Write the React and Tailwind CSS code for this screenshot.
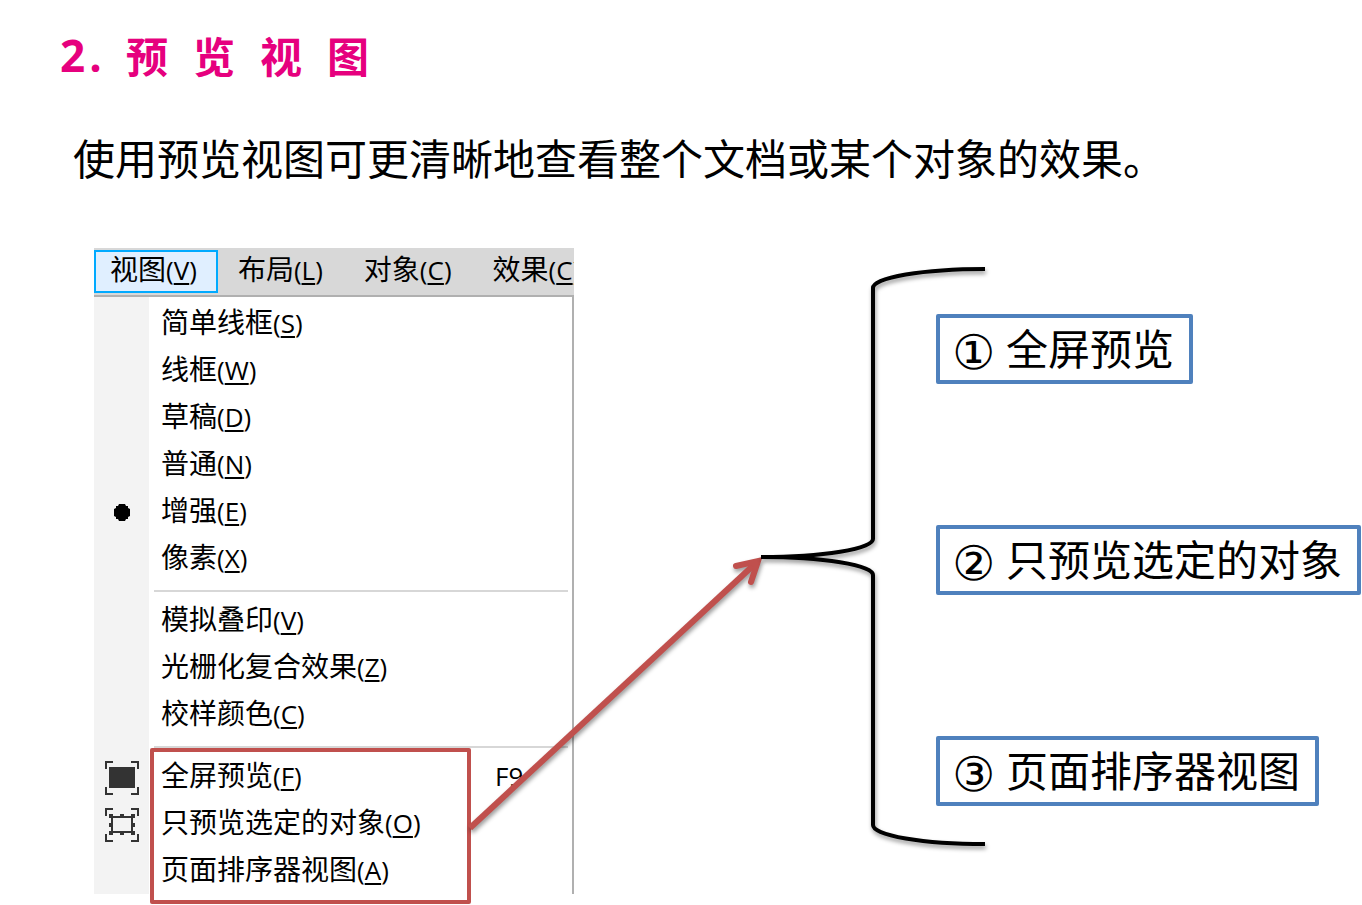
import React from 'react';

const menuBar = [
  { label: '视图', hotkey: 'V', active: true },
  { label: '布局', hotkey: 'L' },
  { label: '对象', hotkey: 'C' },
  { label: '效果', hotkey: 'C' },
];

const menuGroups = [
  [
    { label: '简单线框', hotkey: 'S' },
    { label: '线框', hotkey: 'W' },
    { label: '草稿', hotkey: 'D' },
    { label: '普通', hotkey: 'N' },
    { label: '增强', hotkey: 'E', icon: 'dot' },
    { label: '像素', hotkey: 'X' },
  ],
  [
    { label: '模拟叠印', hotkey: 'V' },
    { label: '光栅化复合效果', hotkey: 'Z' },
    { label: '校样颜色', hotkey: 'C' },
  ],
  [
    { label: '全屏预览', hotkey: 'F', icon: 'full', shortcut: 'F9' },
    { label: '只预览选定的对象', hotkey: 'O', icon: 'selected' },
    { label: '页面排序器视图', hotkey: 'A' },
  ],
];

const options = [
  { num: '①', text: '全屏预览' },
  { num: '②', text: '只预览选定的对象' },
  { num: '③', text: '页面排序器视图' },
];

const Corners = () => (
  <path d="M1 8V1H8 M26 1H33V8 M33 26V33H26 M8 33H1V26" fill="none" stroke="#333" strokeWidth="2" />
);

const ItemIcon = ({ type }) => {
  if (type === 'dot') {
    return (
      <svg width="18" height="18" viewBox="0 0 18 18">
        <path d="M6 1H12L13 3H15V5L17 6V13L15 14V16H13L12 18H6L5 16H3V14L1 13V6L3 5V3H5Z" fill="#000" />
      </svg>
    );
  }
  if (type === 'full') {
    return (
      <svg width="34" height="36" viewBox="0 -2 34 36">
        <Corners />
        <rect x="4" y="6" width="26" height="21" fill="#333" />
      </svg>
    );
  }
  if (type === 'selected') {
    return (
      <svg width="34" height="36" viewBox="0 -2 34 36">
        <Corners />
        <rect x="7" y="9" width="20" height="15" fill="none" stroke="#333" strokeWidth="2" />
        <path
          d="M4 6h4v4h-4z M15 6h4v2h-4z M26 6h4v4h-4z M4 15h2v4h-2z M28 15h2v4h-2z M4 23h4v4h-4z M15 25h4v2h-4z M26 23h4v4h-4z"
          fill="#333"
        />
      </svg>
    );
  }
  return null;
};

const Label = ({ label, hotkey }) => (
  <span className="whitespace-nowrap">
    {label}
    <span className="text-[26px]">
      (<u className="decoration-2 underline-offset-3">{hotkey}</u>)
    </span>
  </span>
);

const ViewMenu = () => (
  <div className="w-[480px] shrink-0 text-[28px] leading-[40px] font-['Open_Sans','Noto_Sans_CJK_SC',sans-serif]">
    <div role="menubar" className="flex h-[49px] gap-1 overflow-hidden border-b-2 border-[#b0b0b0] bg-[#d8d8d8] py-0.5">
      {menuBar.map((item, i) => (
        <button
          key={i}
          role="menuitem"
          className={
            item.active
              ? 'flex h-[43px] shrink-0 items-center border-2 border-[#00aaff] bg-[#e0efff] pl-3.5 pr-[19px] pb-1'
              : 'flex h-[43px] shrink-0 items-center border-2 border-transparent pl-3.5 pr-[19px] pb-1'
          }
        >
          <Label {...item} />
        </button>
      ))}
    </div>
    <div role="menu" className="border-r-2 border-[#b0b0b0] bg-[linear-gradient(to_right,#f3f3f3_55px,#fff_55px)] pt-[3px]">
      {menuGroups.map((group, g) => (
        <div key={g}>
          {g > 0 && <hr className="mt-2 mb-[5px] ml-[60px] mr-1 border-t-2 border-[#d7d7d7]" />}
          <div className="relative">
            {group.map((item) => (
              <button key={item.label} role="menuitem" className="flex h-[47px] w-full items-center text-left">
                <span className="flex w-[55px] shrink-0 justify-center">
                  <ItemIcon type={item.icon} />
                </span>
                <span className="w-[346px] pb-0.5 pl-3">
                  <Label {...item} />
                </span>
                {item.shortcut && <span className="pb-0.5 text-[26px]">{item.shortcut}</span>}
              </button>
            ))}
            {g === menuGroups.length - 1 && (
              <div className="absolute -top-[5px] left-14 h-[156px] w-[321px] rounded-xs border-4 border-[#c0504d]" />
            )}
          </div>
        </div>
      ))}
    </div>
  </div>
);

// arrow from the highlighted group to the brace
const Connector = () => (
  <svg
    className="pointer-events-none absolute top-0 left-0"
    width="900"
    height="656"
    viewBox="94 248 900 656"
    fill="none"
  >
    <g className="drop-shadow-[1px_3px_2px_rgba(0,0,0,0.4)]" strokeWidth="6" stroke="#c0504d">
      <path d="M470 828L757 562" />
      <path d="M736 566L758 561L751 582" strokeLinecap="round" strokeLinejoin="miter" />
    </g>
    <g className="drop-shadow-[1px_3px_2px_rgba(0,0,0,0.4)]" strokeWidth="4" stroke="#000">
      <path d="M985 269A112 19 0 0 0 873 288V539A112 18 0 0 1 761 557A112 18 0 0 1 873 575V825A112 19 0 0 0 985 844" />
    </g>
  </svg>
);

const App = () => {
  return (
    <main className="overflow-x-hidden bg-white text-black font-['Noto_Sans_CJK_SC',sans-serif]">
      <h1 className="flex gap-[25px] pt-[25px] pl-[60px] text-[42px] leading-[60px] font-bold text-[#e6007e]">
        <span className="flex w-[41px] gap-1 font-['Open_Sans','Noto_Sans_CJK_SC',sans-serif] text-[44px]">
          <span>2</span>
          <span>.</span>
        </span>
        {['预', '览', '视', '图'].map((ch) => (
          <span key={ch}>{ch}</span>
        ))}
      </h1>

      <p className="mt-[42px] pl-[73px] text-[42px] leading-[60px] whitespace-nowrap">
        使用预览视图可更清晰地查看整个文档或某个对象的效果。
      </p>

      <section className="relative mt-[61px] ml-[94px] flex pb-[11px]">
        <ViewMenu />
        <ol className="ml-[362px] flex flex-col items-start gap-[141px] pt-[66px]">
          {options.map((opt) => (
            <li
              key={opt.num}
              className="flex h-[70px] items-center gap-3 rounded-xs border-4 border-[#4f81bd] pl-3 pr-[15px] text-[42px] leading-[60px] whitespace-nowrap"
            >
              <span className="w-[42px] pt-1.5 text-center font-['DejaVu_Sans',sans-serif] text-[48px]">{opt.num}</span>
              <span className="pb-1">{opt.text}</span>
            </li>
          ))}
        </ol>
        <Connector />
      </section>
    </main>
  );
};

export default App;
